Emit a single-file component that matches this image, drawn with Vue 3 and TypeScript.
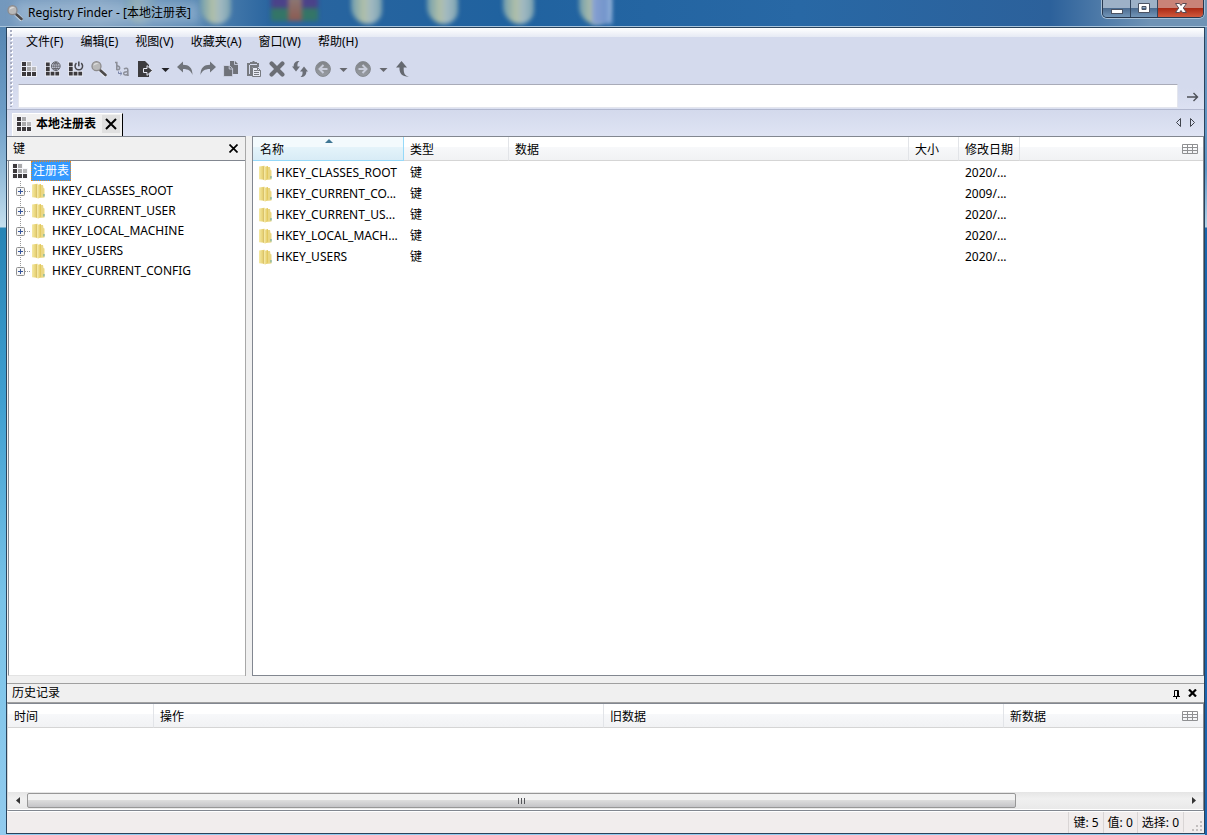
<script setup lang="ts">
import { ref } from 'vue'

interface Tool {
  id: string
  label: string
  arrow?: boolean
}

const menus: string[] = ['文件(F)', '编辑(E)', '视图(V)', '收藏夹(A)', '窗口(W)', '帮助(H)']

const tools: Tool[] = [
  { id: 'grid', label: '本地注册表' },
  { id: 'globe', label: '远程注册表' },
  { id: 'power', label: '脱机注册表' },
  { id: 'find', label: '查找' },
  { id: 'replace', label: '替换' },
  { id: 'export', label: '导出' },
  { id: 'drop', label: '导出选项', arrow: true },
  { id: 'undo', label: '撤消' },
  { id: 'redo', label: '重做' },
  { id: 'copy', label: '复制' },
  { id: 'paste', label: '粘贴' },
  { id: 'delete', label: '删除' },
  { id: 'refresh', label: '刷新' },
  { id: 'back', label: '后退' },
  { id: 'dropgray', label: '后退历史', arrow: true },
  { id: 'forward', label: '前进' },
  { id: 'dropgray', label: '前进历史', arrow: true },
  { id: 'up', label: '向上' },
]

const treeKeys: string[] = [
  'HKEY_CLASSES_ROOT',
  'HKEY_CURRENT_USER',
  'HKEY_LOCAL_MACHINE',
  'HKEY_USERS',
  'HKEY_CURRENT_CONFIG',
]

const rows = [
  { name: 'HKEY_CLASSES_ROOT', date: '2020/...' },
  { name: 'HKEY_CURRENT_CO...', date: '2009/...' },
  { name: 'HKEY_CURRENT_US...', date: '2020/...' },
  { name: 'HKEY_LOCAL_MACH...', date: '2020/...' },
  { name: 'HKEY_USERS', date: '2020/...' },
]

const status: string[] = ['键: 5', '值: 0', '选择: 0']
const address = ref('')
</script>

<template>
  <svg class="defs" aria-hidden="true">
    <defs>
      <linearGradient id="foldA" x1="0" x2="1" y1="0" y2="0">
        <stop offset="0" stop-color="#f5eaa6" />
        <stop offset="1" stop-color="#e0c65c" />
      </linearGradient>
      <linearGradient id="foldB" x1="0" x2="1" y1="0" y2="0">
        <stop offset="0" stop-color="#fbf2b8" />
        <stop offset="1" stop-color="#dfc455" />
      </linearGradient>
      <linearGradient id="disc" x1="0" x2="0" y1="0" y2="1">
        <stop offset="0" stop-color="#808388" />
        <stop offset="1" stop-color="#989ca2" />
      </linearGradient>
    </defs>
    <symbol id="i-grid" viewBox="0 0 16 16">
      <path fill="#f3f4f9" d="M0 0h11v5h5v11H0z" opacity=".7" />
      <path fill="#3d3a3d" d="M1 1h4v4H1zM1 6h4v4H1zM1 11h4v4H1zM6 11h4v4H6zM11 11h4v4h-4z" />
      <path fill="#aaaaac" d="M6 1h4v4H6zM6 6h4v4H6z" />
      <path fill="#b9b9bb" d="M11 6h4v4h-4z" />
    </symbol>
    <symbol id="i-globe" viewBox="0 0 17 16">
      <path fill="#f3f4f9" d="M0 0h6v10h10v6H0z" opacity=".7" />
      <path fill="#3d3a3d" d="M1 1h4v4H1zM1 6h4v4H1zM1 11h4v4H1zM6 11h4v4H6zM11 11h4v4h-4z" />
      <circle cx="11.500" cy="5" r="4.600" fill="#d5daec" stroke="#55565c" />
      <path fill="none" stroke="#55565c" stroke-width=".8" d="M7 5h9M11.500.5v9M8 2.500h7M8 7.500h7M11.500.5c-3 2.500-3 6.500 0 9M11.500.5c3 2.500 3 6.500 0 9" />
    </symbol>
    <symbol id="i-power" viewBox="0 0 17 16">
      <path fill="#f3f4f9" d="M0 0h6v10h10v6H0z" opacity=".7" />
      <path fill="#3d3a3d" d="M1 1h4v4H1zM1 6h4v4H1zM1 11h4v4H1zM6 11h4v4H6zM11 11h4v4h-4z" />
      <path fill="none" stroke="#48474c" stroke-width="1.600" d="M11.500 0v5M9 1.800a4 4 0 1 0 5 0" />
    </symbol>
    <symbol id="i-find" viewBox="0 0 16 16">
      <path stroke="#fff" stroke-width="4" stroke-linecap="round" d="M9.500 9.500l4.500 4.500" opacity=".6" />
      <path stroke="#4c4a4b" stroke-width="2.600" stroke-linecap="round" d="M9.500 9.500l5 4.500" />
      <circle cx="5.500" cy="5.200" r="4.500" fill="#b9b9b9" stroke="#8d8b8c" stroke-width="1.300" />
      <path fill="#dedede" d="M2.500 5c0-2 1.500-3 3-3s2 1 2 1-3 0-5 2" />
    </symbol>
    <symbol id="i-replace" viewBox="0 0 16 16">
      <path fill="none" stroke="#8c8f99" stroke-width="1.600" d="M1 1.500h1.800V9M2.500 5.500c3-2 4.500 3 1.500 3.300H2.500M10 8c2-1.300 3.800-.8 3.800 1v5.200h1M13.800 10.800c-3-.3-4.500.7-4 2.200.7 1.500 3 1 4 0" />
      <path fill="none" stroke="#7883a8" d="M4.500 10.500v2h3M6.200 10.800l1.800 1.700-1.800 1.700" />
    </symbol>
    <symbol id="i-export" viewBox="0 0 16 16">
      <path fill="#3c3b3e" d="M1 0h7l4 4v12H1z" />
      <path fill="#3c3b3e" stroke="#e8ebf5" d="M6.500 7.500h3.500V4.600L15.500 9.500 10 14.400v-2.900H6.500z" />
    </symbol>
    <symbol id="i-drop" viewBox="0 0 16 16"><path fill="#232327" d="M4.500 7h8l-4 4z" /></symbol>
    <symbol id="i-dropgray" viewBox="0 0 16 16"><path fill="#67696f" d="M4.500 7h8l-4 4z" /></symbol>
    <symbol id="i-undo" viewBox="0 0 16 16">
      <path fill="#70747b" d="M0 6l6-5.500v3.300c6 0 9.500 3 9.500 10.200-1.500-4-4-6-9.500-6v3.500z" />
    </symbol>
    <symbol id="i-redo" viewBox="0 0 16 16">
      <path fill="#70747b" d="M16 6l-6-5.500v3.300c-6 0-9.500 3-9.500 10.200 1.500-4 4-6 9.500-6v3.500z" />
    </symbol>
    <symbol id="i-copy" viewBox="0 0 16 16">
      <path fill="#6f7279" d="M7 0h5l3 3v10H7z" />
      <path fill="#6f7279" stroke="#d5daec" stroke-width=".8" d="M.6 4.500h6l3 3v8.100h-9z" />
      <path fill="none" stroke="#d5daec" stroke-width=".8" d="M11.500 0v3.500H15M6.200 4.500v3.500h3.400" />
    </symbol>
    <symbol id="i-paste" viewBox="0 0 16 16">
      <path fill="#777a80" d="M1 2h3V1h2l1-1h1l1 1h2v1h2v4H6v9H1z" />
      <path fill="#d5daec" d="M4 3h7v1H4zM3 4h1v9H3z" />
      <path fill="#e7eaf4" stroke="#777a80" d="M6.500 6.500h5l3 3v6h-8z" />
      <path fill="none" stroke="#777a80" d="M8 9.500h3M8 11.500h5M8 13.500h5M11.500 6.500v3h3" />
    </symbol>
    <symbol id="i-delete" viewBox="0 0 16 16">
      <path stroke="#6b6e75" stroke-width="4.200" stroke-linecap="round" d="M2.600 2.600l10.800 10.800M13.400 2.600L2.600 13.400" />
    </symbol>
    <symbol id="i-refresh" viewBox="0 0 16 16">
      <path fill="#6a6e76" d="M7.500 0C3.500 0 1.500 2 1.700 5.500H0L4 10.500l4-5H5.500C5.200 3 5.800 1.300 7.500 0zM8.500 16c4 0 6-2 5.800-5.500H16L12 5.500l-4 5h2.500c.3 2.500-.3 4.200-2 5.500z" />
    </symbol>
    <symbol id="i-back" viewBox="0 0 16 16">
      <circle cx="8" cy="8" r="7.400" fill="url(#disc)" stroke="#85898f" />
      <path fill="none" stroke="#c8ccda" stroke-width="2" d="M8.500 4l-4 4 4 4M5 8h7.500" />
    </symbol>
    <symbol id="i-forward" viewBox="0 0 16 16">
      <circle cx="8" cy="8" r="7.400" fill="url(#disc)" stroke="#85898f" />
      <path fill="none" stroke="#c8ccda" stroke-width="2" d="M7.500 4l4 4-4 4M11 8H3.500" />
    </symbol>
    <symbol id="i-up" viewBox="0 0 16 16">
      <path fill="#656970" d="M6.500 0L1 6.500h3.500C4.200 12 6.500 15.800 14 15.800c-4-1-5.500-3-5.300-9.300H12z" />
    </symbol>
    <symbol id="i-folder" viewBox="0 0 16 16">
      <path fill="#ead784" d="M8 2h4l.5 3 1 .5v9L8 15z" />
      <path fill="url(#foldA)" d="M1 1.500L6.500.8v14L1 14.200z" />
      <path fill="url(#foldB)" d="M5.500 2l4.500-1v12.500L7 15.800l-1.500-1.300z" />
      <path fill="#c3a548" d="M5.300 2h.5v12.800h-.5z" />
      <path fill="#5fa8a5" d="M12.500 11h1v2.500h-1z" />
    </symbol>
    <symbol id="i-table" viewBox="0 0 16 10">
      <path fill="none" stroke="#8f9092" d="M.5.5h15v9H.5zM0 3.500h16M0 6.500h16M5.500 0v10M10.500 0v10" />
    </symbol>
  </svg>

  <div class="window">
    <header class="titlebar">
      <div class="desktop" aria-hidden="true">
        <i class="glow"></i>
        <i class="blob b1"></i>
        <i class="blob b2"></i>
        <i class="blob b3"></i>
        <i class="blob b4"></i>
        <i class="blob b5"></i>
        <i class="archive"></i>
        <i class="blob b6"></i>
        <i class="notes"></i>
      </div>
      <svg class="app-icon"><use href="#i-find" /></svg>
      <h1>Registry Finder - [本地注册表]</h1>
      <div class="caption">
        <button aria-label="最小化">
          <svg width="14" height="14"><rect x="1.500" y="7.500" width="11" height="4" fill="#fff" stroke="#4b5363" /></svg>
        </button>
        <button aria-label="还原">
          <svg width="14" height="14">
            <path fill="#fff" fill-rule="evenodd" stroke="#4b5363" d="M1.500 1.500h11v9h-11zM5 4.500h4v3H5z" />
          </svg>
        </button>
        <button class="close" aria-label="关闭">
          <svg width="14" height="14">
            <path fill="#fff" stroke="#5a4a52" d="M1.500 1.500h4L7 3.500l1.500-2h4L9.300 6l3.200 4.500h-4L7 8.500l-1.500 2h-4L4.700 6z" />
          </svg>
        </button>
      </div>
    </header>

    <div class="client">
      <div class="rebar">
        <div class="gripper"></div>
        <div class="bands">
          <nav class="menu">
            <button v-for="m in menus" :key="m">{{ m }}</button>
          </nav>
          <div class="toolbar" role="toolbar" aria-label="工具栏">
            <button v-for="(t, i) in tools" :key="i" :class="{ narrow: t.arrow }" :aria-label="t.label">
              <svg><use :href="'#i-' + t.id" /></svg>
            </button>
          </div>
          <form class="address" @submit.prevent>
            <input v-model="address" type="text" aria-label="地址" />
            <button aria-label="转到">
              <svg width="12" height="10"><path fill="none" stroke="#4d5058" stroke-width="1.400" d="M0 5h10M6.500 1l4 4-4 4" /></svg>
            </button>
          </form>
        </div>
      </div>

      <div class="tabs">
        <div class="tab">
          <svg class="ico"><use href="#i-grid" /></svg>
          <span>本地注册表</span>
          <button aria-label="关闭标签">
            <svg width="12" height="12"><path stroke="#000" stroke-width="2" d="M1 1l10 10M11 1L1 11" /></svg>
          </button>
        </div>
        <div class="tab-nav">
          <button aria-label="上一个标签">
            <svg width="6" height="9"><path fill="none" stroke="#3f434c" d="M5.500.5v8l-4-4z" /></svg>
          </button>
          <button aria-label="下一个标签">
            <svg width="6" height="9"><path fill="none" stroke="#3f434c" d="M.5.5v8l4-4z" /></svg>
          </button>
        </div>
      </div>

      <div class="panes">
        <aside class="keys">
          <div class="keys-head">
            <span>键</span>
            <button aria-label="关闭窗格">
              <svg width="9" height="9"><path stroke="#000" stroke-width="1.700" d="M.5.5l8 8M8.500.5l-8 8" /></svg>
            </button>
          </div>
          <div class="tree">
            <div class="root">
              <svg class="ico"><use href="#i-grid" /></svg>
              <span>注册表</span>
            </div>
            <ul>
              <li v-for="k in treeKeys" :key="k">
                <button class="expand" :aria-label="'展开 ' + k">
                  <svg width="9" height="9">
                    <rect x=".5" y=".5" width="8" height="8" rx="1" fill="#f6f6f6" stroke="#8f8f8f" />
                    <path stroke="#34549a" d="M2 4.500h5M4.500 2v5" />
                  </svg>
                </button>
                <i class="dots"></i>
                <svg class="ico"><use href="#i-folder" /></svg>
                <span>{{ k }}</span>
              </li>
            </ul>
          </div>
        </aside>

        <main class="list">
          <table>
            <colgroup>
              <col class="w-name" /><col class="w-type" /><col class="w-data" /><col class="w-size" /><col class="w-date" /><col />
            </colgroup>
            <thead>
              <tr>
                <th class="sorted">名称<svg class="sort" width="8" height="4"><path fill="#3f7694" d="M0 4l4-4 4 4z" /></svg></th>
                <th>类型</th>
                <th>数据</th>
                <th>大小</th>
                <th>修改日期</th>
                <th class="end"><svg class="tbl"><use href="#i-table" /></svg></th>
              </tr>
            </thead>
            <tbody>
              <tr v-for="r in rows" :key="r.name">
                <td class="name"><div><svg class="ico"><use href="#i-folder" /></svg><span>{{ r.name }}</span></div></td>
                <td>键</td>
                <td></td>
                <td></td>
                <td>{{ r.date }}</td>
                <td></td>
              </tr>
            </tbody>
          </table>
        </main>
      </div>

      <section class="history">
        <div class="history-head">
          <span>历史记录</span>
          <button class="pin" aria-label="固定">
            <svg width="7" height="9"><path fill="none" stroke="#000" d="M1.500 6V.5h4V6M0 6.500h7M3.500 6v3M4.500 0v6" /></svg>
          </button>
          <button aria-label="关闭历史记录">
            <svg width="9" height="8"><path stroke="#000" stroke-width="2.200" d="M1 .5l7 7M8 .5l-7 7" /></svg>
          </button>
        </div>
        <div class="history-body">
          <table>
            <colgroup>
              <col class="h-time" /><col class="h-op" /><col class="h-old" /><col />
            </colgroup>
            <thead>
              <tr>
                <th>时间</th>
                <th>操作</th>
                <th>旧数据</th>
                <th><div class="last"><span>新数据</span><svg class="tbl"><use href="#i-table" /></svg></div></th>
              </tr>
            </thead>
          </table>
          <div class="scroll">
            <button aria-label="向左滚动"><svg width="4" height="7"><path fill="#333" d="M4 0v7L0 3.500z" /></svg></button>
            <div class="track">
              <div class="thumb"><svg width="8" height="6"><path stroke="#55565a" d="M.5 0v6M3.500 0v6M6.500 0v6" /></svg></div>
            </div>
            <button aria-label="向右滚动"><svg width="4" height="7"><path fill="#333" d="M0 0v7l4-3.500z" /></svg></button>
          </div>
        </div>
      </section>

      <footer class="status">
        <span v-for="s in status" :key="s">{{ s }}</span>
        <svg class="grip" width="20" height="20">
          <path fill="#c2bebe" d="M16 9h2v2h-2zM12 13h2v2h-2zM16 13h2v2h-2zM8 17h2v2H8zM12 17h2v2h-2zM16 17h2v2h-2z" />
        </svg>
      </footer>
    </div>
  </div>
</template>

<style>
body {
  margin: 0;
  overflow: hidden;
}
</style>

<style scoped>
.defs {
  position: absolute;
  width: 0;
  height: 0;
}
.window {
  box-sizing: border-box;
  height: 100vh;
  display: flex;
  flex-direction: column;
  padding: 0 2px 1px 6px;
  font: 12px/16px "Noto Sans", "Noto Sans CJK SC", sans-serif;
  color: #000;
  background:
    linear-gradient(#6d93b8, #5d96c6 170px, #b4d5ea 227px, #1b66ac 228px, #1c64ad 100%) right / 2px 100% no-repeat,
    linear-gradient(#4f7fac, #6c9cc6 110px, #8fb9d8 170px, #c5dfee 227px, #2784b5 228px, #3f9fd0 400px, #79c3e8 600px, #92cbee 100%);
}
button {
  display: flex;
  align-items: center;
  justify-content: center;
  padding: 0;
  border: 0;
  background: none;
  font: inherit;
  color: inherit;
}
svg {
  display: block;
  flex: none;
}
.ico {
  width: 16px;
  height: 16px;
}
.titlebar {
  position: relative;
  flex: none;
  height: 27px;
  display: flex;
  align-items: flex-start;
  margin: 0 -2px 0 -6px;
  padding: 0 3px 0 7px;
  box-sizing: border-box;
  overflow: hidden;
  background: linear-gradient(90deg, #7398bd 0, #7fa0c0 100px, #5585b1 200px, #2a659f 270px, #20629f 500px, #2868a5 800px, #2c619b 1050px, #6f93b5 1150px, #6f93b5 100%);
  box-shadow: inset 0 -1px #a9c4db;
}
.desktop i {
  position: absolute;
  filter: blur(2px);
}
.desktop .glow {
  left: 16px;
  top: 2px;
  width: 184px;
  height: 22px;
  background: rgba(190, 211, 230, 0.4);
  filter: blur(5px);
}
.blob {
  top: -8px;
  width: 31px;
  height: 32px;
  border-radius: 4px 8px 14px 18px;
  background: linear-gradient(90deg, #6f9cae, #b0bfa8 40%, #a1b9c2 65%, #7ba2b0);
}
.b1 { left: 200px; }
.b2 { left: 351px; }
.b3 { left: 427px; }
.b4 { left: 503px; }
.b5 { left: 124px; opacity: 0.4; }
.b6 { left: 579px; }
.archive {
  left: 271px;
  top: -4px;
  width: 47px;
  height: 25px;
  background:
    linear-gradient(#8a7a78, #8d5a50) center / 14px 100% no-repeat,
    linear-gradient(#4b4289 50%, #347567 50%);
}
.notes {
  left: 592px;
  top: -4px;
  width: 20px;
  height: 28px;
  background: linear-gradient(90deg, #8aa2d2, #7194cb 70%, #9bb9e0);
}
.app-icon {
  position: relative;
  width: 16px;
  height: 16px;
  margin: 5px 5px 0 0;
}
h1 {
  position: relative;
  flex: 1;
  margin: 5px 0 0;
  font: inherit;
}
.caption {
  position: relative;
  display: flex;
  height: 18px;
  box-sizing: border-box;
  border: 1px solid #27384f;
  border-top: 0;
  border-radius: 0 0 5px 5px;
  box-shadow: 0 0 0 1px #a6bfd6;
  overflow: hidden;
}
.caption button {
  width: 28px;
  border-right: 1px solid #33465e;
  background: linear-gradient(#9db1c7 45%, #4c6c90 50%, #7396b8);
}
.caption button:nth-child(2) {
  width: 27px;
}
.caption .close {
  width: 45px;
  border-right: 0;
  background: linear-gradient(#c98378 45%, #ab2b16 50%, #d0593d);
}
.client {
  flex: 1;
  min-height: 0;
  display: flex;
  flex-direction: column;
  border: 1px solid #29435c;
  background: #f0f0f0;
}
.rebar {
  flex: none;
  display: flex;
  background: linear-gradient(#fff, #e6eaf4 9px, #d4daed 9px, #d4daed 60px, #dce1f2);
  border-bottom: 1px solid #b2b8cf;
}
.gripper {
  width: 3px;
  margin: 2px 5px 2px 3px;
  background:
    linear-gradient(#a9aec2 2px, transparent 2px) 0 0 / 2px 4px repeat-y,
    linear-gradient(transparent 1px, #fff 1px, #fff 3px, transparent 3px) 1px 0 / 2px 4px repeat-y;
}
.bands {
  flex: 1;
}
.menu {
  display: flex;
  gap: 1px;
  height: 28px;
}
.menu button {
  padding: 0 8px;
}
.toolbar {
  display: flex;
  height: 28px;
}
.toolbar button {
  width: 23px;
  padding-bottom: 3px;
}
.toolbar .narrow {
  width: 17px;
}
.toolbar svg {
  width: 16px;
  height: 16px;
}
.toolbar button:first-child {
  justify-content: flex-start;
  padding-left: 3px;
  box-sizing: border-box;
}
.address {
  display: flex;
  height: 25px;
}
.address input {
  flex: 1;
  height: 24px;
  box-sizing: border-box;
  border: 1px solid #e4e6ee;
  border-top-color: #a9abb8;
  background: #fff;
  padding: 0 4px;
  font: inherit;
  outline: 0;
}
.address button {
  width: 26px;
  padding-left: 4px;
}
.tabs {
  flex: none;
  display: flex;
  justify-content: space-between;
  height: 26px;
  background: linear-gradient(#d3d9ec, #dfe4f4);
}
.tab {
  display: flex;
  align-items: center;
  margin: 3px 0 0 5px;
  padding: 0 2px 2px 3px;
  border: solid #fff;
  border-width: 1px 1px 0;
  border-right-color: #000;
  background: #f0f0f0;
  font-weight: 700;
}
.tab span {
  margin: 0 6px 0 4px;
}
.tab button {
  width: 18px;
  height: 18px;
  background: #e0e0e0;
}
.tab-nav {
  display: flex;
  padding: 0 4px 2px 0;
}
.tab-nav button {
  width: 15px;
}
.panes {
  flex: 1;
  min-height: 0;
  display: flex;
  gap: 6px;
}
.keys {
  width: 238px;
  display: flex;
  flex-direction: column;
  border-top: 1px solid #828790;
  border-right: 1px solid #a8a8a8;
}
.keys-head {
  display: flex;
  justify-content: space-between;
  align-items: center;
  height: 23px;
  padding: 0 7px 0 6px;
  border-bottom: 1px solid #828790;
}
.tree {
  flex: 1;
  margin-left: 1px;
  border-left: 1px solid #828790;
  border-bottom: 1px solid #e3e3e3;
  background: #fff;
}
.root {
  display: flex;
  align-items: center;
  gap: 3px;
  height: 20px;
  padding-left: 3px;
}
.root span {
  padding: 1px;
  border: 1px dotted #e08a28;
  line-height: 16px;
  color: #fff;
  background: #3399ff;
}
ul {
  margin: 0 0 0 11px;
  padding: 0;
  list-style: none;
  background: linear-gradient(#9a9a9a 1px, transparent 1px) 0 0 / 1px 2px repeat-y;
  height: 90px;
}
li {
  display: flex;
  align-items: center;
  height: 20px;
}
.expand {
  margin-left: -4px;
}
.dots {
  width: 6px;
  height: 1px;
  background: repeating-linear-gradient(90deg, #9a9a9a 0 1px, transparent 1px 2px);
}
li span {
  margin-left: 5px;
}
.list {
  flex: 1;
  min-width: 0;
  border: 1px solid #828790;
  background: #fff;
}
table {
  width: 100%;
  table-layout: fixed;
  border-collapse: separate;
  border-spacing: 0;
}
.w-name { width: 151px; }
.w-type { width: 105px; }
.w-data { width: 400px; }
.w-size { width: 50px; }
.w-date { width: 61px; }
.h-time { width: 146px; }
.h-op { width: 450px; }
.h-old { width: 400px; }
th {
  position: relative;
  box-sizing: border-box;
  height: 24px;
  padding: 2px 0 0 6px;
  text-align: left;
  font-weight: 400;
  white-space: nowrap;
  background: linear-gradient(#fff 45%, #f7f8fa 45%, #f1f2f4);
  border-right: 1px solid #e2e4e8;
  border-bottom: 1px solid #d5d5d5;
}
th:last-child {
  border-right: 0;
}
.sorted {
  padding-left: 7px;
  background: linear-gradient(#f3fafd 45%, #e4f3fa 45%, #d8ecf6);
  border-color: #96d9f9;
}
.sort {
  position: absolute;
  left: 72px;
  top: 2px;
}
.tbl {
  width: 16px;
  height: 10px;
  margin-bottom: 2px;
}
.end .tbl {
  margin-left: auto;
  margin-right: 5px;
}
.last {
  display: flex;
  align-items: center;
  justify-content: space-between;
  padding-right: 5px;
}
td {
  height: 19px;
  padding: 2px 0 0 6px;
  white-space: nowrap;
}
.name div {
  display: flex;
  align-items: center;
}
.name span {
  margin-left: 2px;
}
.list .name {
  padding-left: 5px;
}
.history {
  flex: none;
  margin-top: 7px;
}
.history-head {
  display: flex;
  align-items: center;
  gap: 8px;
  height: 18px;
  padding: 0 7px 0 5px;
  border-top: 1px solid #a0a0a0;
  border-bottom: 1px solid #a0a0a0;
}
.history-head span {
  flex: 1;
}
.pin {
  padding-top: 3px;
}
.history-body {
  display: flex;
  flex-direction: column;
  height: 106px;
  border: 1px solid #828790;
  border-left-color: #d5d5d5;
  background: #fff;
}
.scroll {
  display: flex;
  height: 17px;
  margin: auto 0 1px;
  background: linear-gradient(#e5e5e5, #f0f0f0 40%, #e9e9e9);
}
.scroll button {
  width: 19px;
}
.track {
  flex: 1;
  padding: 1px 0;
}
.thumb {
  display: flex;
  align-items: center;
  justify-content: center;
  box-sizing: border-box;
  width: calc(100% - 168px);
  height: 15px;
  border: 1px solid #979797;
  border-radius: 2px;
  background: linear-gradient(#f2f2f2 45%, #dcdcdc 50%, #c4c4c7);
}
.status {
  flex: none;
  display: flex;
  justify-content: flex-end;
  align-items: stretch;
  height: 21px;
  border-top: 1px solid #fff;
  background: #f1eded;
}
.status span {
  padding: 3px 4px 0;
  border-left: 1px solid #d9d5d5;
}
.status .grip {
  border-left: 1px solid #d9d5d5;
}
</style>
